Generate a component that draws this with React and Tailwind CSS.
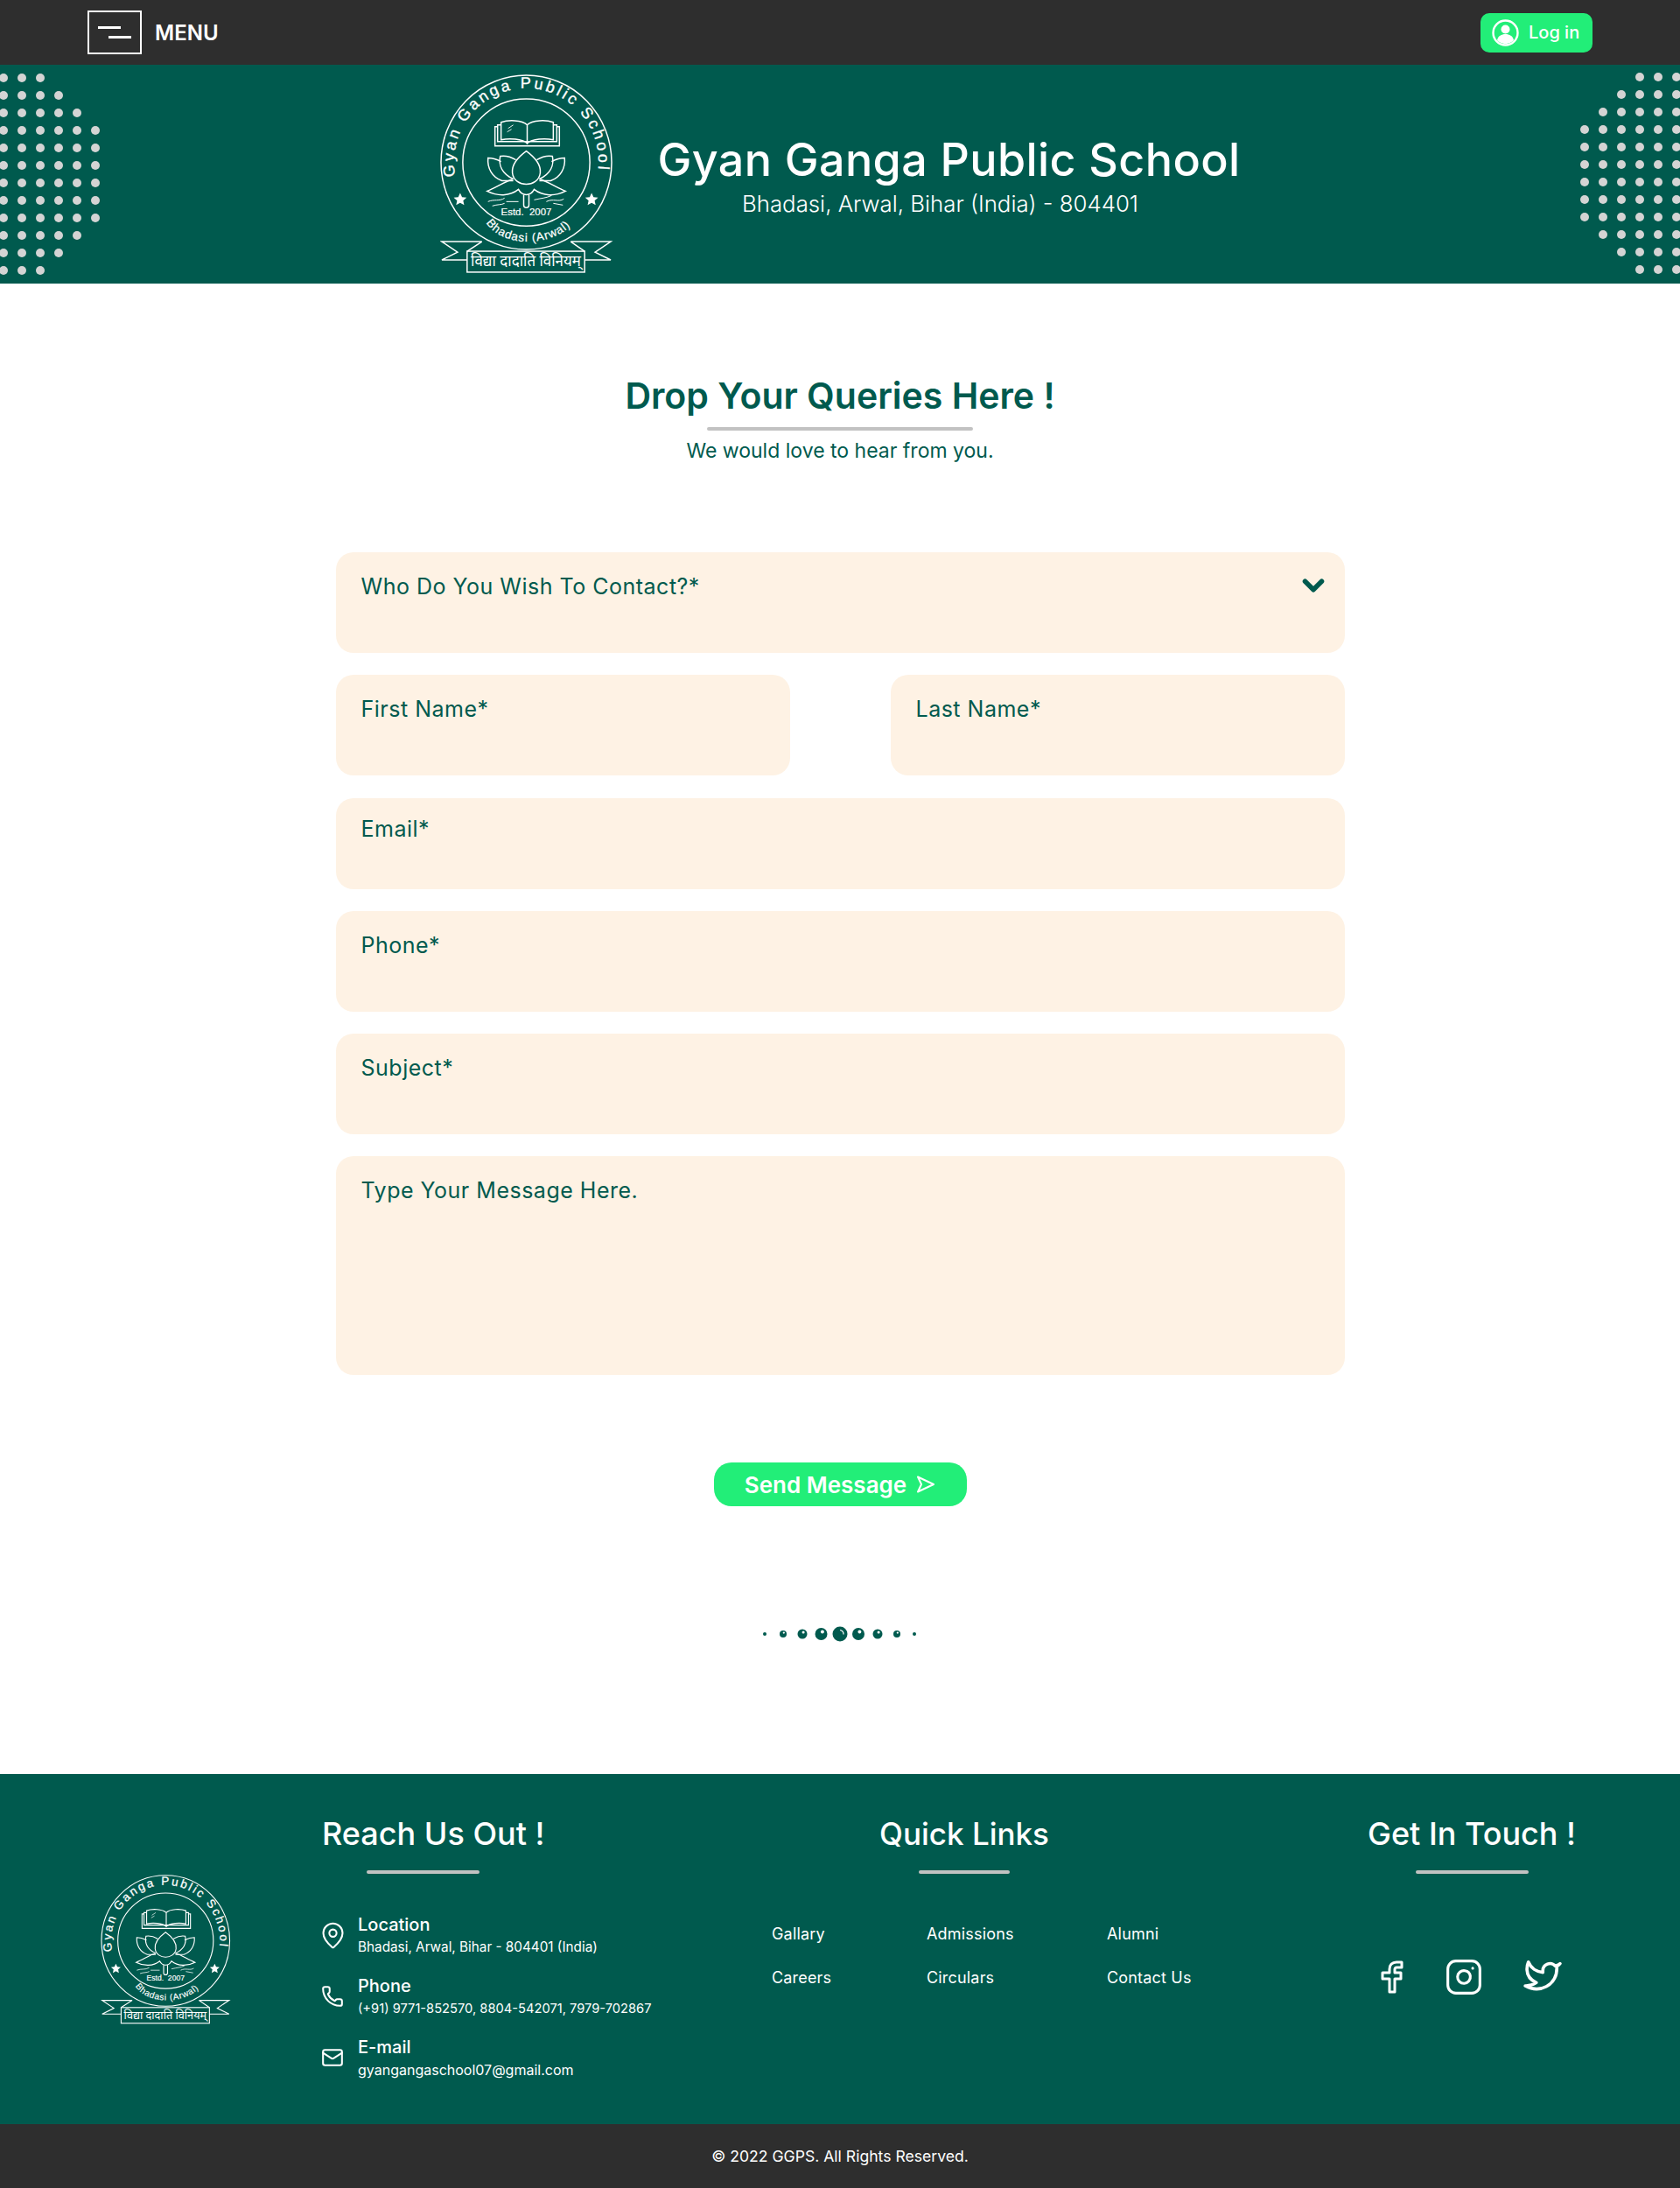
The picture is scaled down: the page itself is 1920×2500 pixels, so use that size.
import { MapPin, Phone, Mail, ChevronDown, Instagram } from 'lucide-react'

const font = "font-['Inter','Noto_Sans',sans-serif]"

function Dots({ counts, side }) {
  // each row is a line of dots hugging the page edge
  return (
    <div className={`flex flex-col gap-[10px] ${side === 'left' ? 'items-start' : 'items-end'}`}>
      {counts.map((count, i) => (
        <div key={i} className="flex gap-[11px]">
          {Array.from({ length: count }).map((_, j) => (
            <span key={j} className="h-[10px] w-[10px] rounded-full bg-[#d4d4d4]" />
          ))}
        </div>
      ))}
    </div>
  )
}

function Logo({ id, className }) {
  return (
    <svg viewBox="0 0 200 230" className={className} fill="none" stroke="#fff" strokeWidth="1.5">
      <defs>
        <path id={`${id}-top`} d="M 17.7 118 A 83 85 0 1 1 180.3 118" />
        <path id={`${id}-bottom`} d="M 50 165 C 65 201 135 201 157 165" />
      </defs>
      <ellipse cx="99" cy="101" rx="98" ry="100" />
      <ellipse cx="99" cy="101" rx="73" ry="73" />
      <text fill="#fff" stroke="#fff" strokeWidth="0.35" fontFamily="Liberation Sans, sans-serif" fontSize="18" letterSpacing="3.1">
        <textPath href={`#${id}-top`} startOffset="1">Gyan Ganga Public School</textPath>
      </text>
      <text fill="#fff" stroke="#fff" strokeWidth="0.2" fontFamily="Liberation Sans, sans-serif" fontSize="13.5" letterSpacing="0.9">
        <textPath href={`#${id}-bottom`} startOffset="6">Bhadasi (Arwal)</textPath>
      </text>
      <text x="99" y="162" textAnchor="middle" fill="#fff" stroke="#fff" strokeWidth="0.2" fontFamily="Liberation Sans, sans-serif" fontSize="11.5" xmlSpace="preserve">
        Estd.  2007
      </text>
      {/* stars */}
      <path d="M23 136l2.2 4.8 5.2.6-3.9 3.5 1.1 5.1-4.6-2.6-4.6 2.6 1.1-5.1-3.9-3.5 5.2-.6z" fill="#fff" stroke="none" />
      <path d="M174 136l2.2 4.8 5.2.6-3.9 3.500 1.1 5.1-4.6-2.6-4.6 2.6 1.1-5.1-3.9-3.5 5.2-.6z" fill="#fff" stroke="none" />
      {/* book */}
      <path d="M100 79V58C94 52 78 52 70 55V75C80 73 94 74 100 79ZM100 79V58C106 52 122 52 130 55V75C120 73 106 74 100 79Z" />
      <path d="M70 58H66V77H100M130 58H134V77H100M66 60H63V82H137V60H134" />
      <path d="M78 62l6-4M77 66l5-3" strokeWidth="0.9" />
      {/* lotus */}
      <path d="M99 88C88 96 82 104 83 113C84 122 92 126 99 126C106 126 114 122 115 113C116 104 110 96 99 88Z" />
      <path d="M87 98C80 94 74 93 69 94C67 104 71 114 84 120M111 98C118 94 124 93 129 94C131 104 127 114 114 120" />
      <path d="M70 100C64 97 60 96 55 96C54 108 60 118 71 122H84M128 100C134 97 138 96 143 96C144 108 138 118 127 122H114" />
      <path d="M84 120C76 122 64 130 54 134C66 140 80 140 90 132C92 136 96 138 99 138C102 138 106 136 108 132C118 140 132 140 144 134C134 130 122 122 114 120" />
      <path d="M96 138V150C96 154 102 154 102 150V138" />
      <path d="M55 146C62 143 68 146 74 142M60 151C66 149 70 150 74 148M76 146H90M108 144C116 142 122 142 128 139M122 146C130 142 136 147 142 143M130 148L141 150" strokeWidth="1" />
      {/* ribbon */}
      <path d="M48 192H2L20 204L2 213H31M150 192H196L178 204L196 213H166M31 203L48 192M166 203L150 192" />
      <rect x="31" y="203" width="135" height="24" />
      <text x="98.5" y="220" textAnchor="middle" fill="#fff" stroke="none" fontFamily="Noto Sans, DejaVu Sans, sans-serif" fontSize="17">
        विद्या दादाति विनियम्
      </text>
    </svg>
  )
}

function Field({ label, className, top = 'pt-[23px]', chevron, full = true }) {
  return (
    <div className={`flex justify-between rounded-[20px] bg-[#fef2e4] pl-[29px] pr-[17px] ${top} ${className} ${full ? 'w-full' : 'w-[519px]'}`}>
      <span className="text-[25px] leading-[32px] text-[#005a4e] tracking-[0.02em]">{label}</span>
      {chevron && <ChevronDown className="h-[38px] w-[38px] text-[#005a4e] -mt-[4px]" strokeWidth={3.5} />}
    </div>
  )
}

function Bubbles() {
  const bubbles = [
    [874, 2], [895, 4], [917, 5.5], [938.5, 7], [960, 8.5], [981, 7], [1003, 5.5], [1025, 4], [1045, 2]
  ]
  return (
    <svg width="190" height="20" viewBox="865 1857 190 20">
      {bubbles.map(([x, r]) => (
        <g key={x}>
          <circle cx={x} cy="1867" r={r} fill="#005a4e" />
          {r > 3 && r < 8 && <circle cx={x + r * 0.2} cy={1867 - r * 0.35} r={r * 0.28} fill="#fff" />}
        </g>
      ))}
      <path d="M960 1862.5a4.5 4.5 0 0 1 4 5" stroke="#fff" strokeWidth="1.2" fill="none" />
    </svg>
  )
}

function ContactItem({ icon, title, text, textClass }) {
  return (
    <div className="flex items-center gap-[18px]">
      <div className="flex h-[22px] w-[22px] items-center justify-center text-white">{icon}</div>
      <div>
        <p className="text-[20px] font-medium leading-[28px] text-white">{title}</p>
        <p className={`leading-[24px] text-white whitespace-nowrap ${textClass}`}>{text}</p>
      </div>
    </div>
  )
}

export default function App() {
  return (
    <div className={`w-full bg-white ${font}`}>
      {/* top bar */}
      <div className="flex h-[74px] items-center justify-between bg-[#2e2e2e] px-[100px]">
        <div className="flex items-center gap-[15px]">
          <div className="flex h-[50px] w-[62px] flex-col items-center justify-center gap-[8px] border-2 border-white">
            <span className="h-[3px] w-[26px] -translate-x-[6px] bg-white" />
            <span className="h-[3px] w-[26px] translate-x-[6px] bg-white" />
          </div>
          <span className="pt-[2px] text-[24px] font-semibold text-white">MENU</span>
        </div>
        <div className="flex h-[45px] w-[128px] items-center gap-[11px] rounded-[10px] bg-[#22ee78] pl-[13px]">
          <svg width="31" height="31" viewBox="0 0 31 31">
            <circle cx="15.5" cy="15.5" r="14" fill="none" stroke="#fff" strokeWidth="2.4" />
            <circle cx="15.5" cy="11.5" r="5" fill="#fff" />
            <path d="M6 24c1-5 5-7 9.500-7s8.500 2 9.500 7c-5 5.500-14 5.500-19 0z" fill="#fff" />
          </svg>
          <span className="text-[20px] font-medium text-white">Log in</span>
        </div>
      </div>

      {/* banner */}
      <div className="relative flex h-[250px] items-center justify-center overflow-hidden bg-[#005a4e]">
        <div className="absolute left-0 top-[10px] -ml-[1px]">
          <Dots side="left" counts={[3, 4, 5, 6, 6, 6, 6, 6, 6, 5, 4, 3]} />
        </div>
        <div className="absolute right-0 top-[9px] -mr-[1px]">
          <Dots side="right" counts={[3, 4, 5, 6, 6, 6, 6, 6, 6, 5, 4, 3]} />
        </div>
        <div className="flex items-center gap-[50px]">
          <Logo id="banner" className="h-[229px] w-[199px]" />
          <div className="mt-[6px] flex w-[666px] flex-col items-center">
            <h1 className="text-[52px] font-medium leading-[60px] text-white tracking-[0.008em] whitespace-nowrap">Gyan Ganga Public School</h1>
            <p className="mt-[2px] pr-[20px] text-[25.8px] font-light leading-[36px] text-white">Bhadasi, Arwal, Bihar (India) - 804401</p>
          </div>
        </div>
      </div>

      {/* contact form */}
      <div className="flex flex-col items-center pt-[98px]">
        <h2 className="text-[41px] font-semibold leading-[60px] text-[#005a4e]">Drop Your Queries Here !</h2>
        <div className="mt-[6px] h-[4px] w-[304px] rounded-full bg-[#c2c2c2]" />
        <p className="mt-[7px] text-[23px] leading-[33px] text-[#005a4e]">We would love to hear from you.</p>

        <div className="mt-[99px] flex w-[1153px] flex-col gap-[25.3px]">
          <Field label="Who Do You Wish To Contact?*" className="h-[115px]" chevron />
          <div className="flex justify-between">
            <Field label="First Name*" className="h-[115px]" full={false} />
            <Field label="Last Name*" className="h-[115px]" full={false} />
          </div>
          <Field label="Email*" className="h-[104px]" top="pt-[19px]" />
          <Field label="Phone*" className="h-[115px]" />
          <Field label="Subject*" className="h-[115px]" />
          <Field label="Type Your Message Here." className="h-[250px]" />
        </div>

        <button className="mt-[100px] flex h-[50px] w-[289px] items-center justify-center gap-[11px] rounded-[20px] bg-[#22ee78] text-[26px] font-semibold text-white">
          Send Message
          <svg width="22" height="22" viewBox="0 0 22 22" fill="none" stroke="#fff" strokeWidth="2" strokeLinejoin="round">
            <path d="M2 2.500L20 11L2 19.500L6 11Z" />
          </svg>
        </button>

        <div className="mb-[150px] mt-[136px] flex">
          <Bubbles />
        </div>
      </div>

      {/* footer */}
      <div className="flex h-[400px] items-start bg-[#005a4e] pl-[115px] pt-[43px]">
        <div className="mr-[104px] mt-[72px]">
          <Logo id="footer" className="h-[172px] w-[150px]" />
        </div>

        <div className="w-[513px]">
          <h3 className="-ml-[1px] text-[36px] font-medium leading-[50px] text-white">Reach Us Out !</h3>
          <div className="ml-[50px] mt-[17px] h-[4px] w-[129px] rounded-full bg-[#c2c2c2]" />
          <div className="mt-[44px] flex flex-col gap-[18px]">
            <ContactItem icon={<MapPin className="shrink-0" size={33} strokeWidth={1.5} />} title="Location" text="Bhadasi, Arwal, Bihar - 804401 (India)" textClass="text-[15.3px]" />
            <ContactItem icon={<Phone className="shrink-0" size={26} strokeWidth={1.9} />} title="Phone" text="(+91) 9771-852570, 8804-542071, 7979-702867" textClass="text-[14.7px]" />
            <ContactItem icon={<Mail className="shrink-0" size={26} strokeWidth={1.9} />} title="E-mail" text="gyangangaschool07@gmail.com" textClass="text-[16px]" />
          </div>
        </div>

        <div className="w-[440px]">
          <h3 className="text-center text-[35px] font-medium leading-[50px] text-white">Quick Links</h3>
          <div className="mx-auto mt-[17px] h-[4px] w-[104px] rounded-full bg-[#c2c2c2]" />
          <div className="mt-[55px] grid grid-cols-[177px_206px_auto] gap-y-[23px] text-[18px] leading-[27px] tracking-[0.01em] text-white whitespace-nowrap">
            <span>Gallary</span>
            <span>Admissions</span>
            <span>Alumni</span>
            <span>Careers</span>
            <span>Circulars</span>
            <span>Contact Us</span>
          </div>
        </div>

        <div className="ml-[241px] w-[240px]">
          <h3 className="text-[36px] font-medium leading-[50px] text-white whitespace-nowrap">Get In Touch !</h3>
          <div className="ml-[55px] mt-[17px] h-[4px] w-[129px] rounded-full bg-[#c2c2c2]" />
          <div className="ml-[15px] mt-[96px] flex items-center text-white">
            <svg width="26" height="38" viewBox="0 0 26 38" fill="none" stroke="currentColor" strokeWidth="3" strokeLinejoin="round">
              <path d="M24 2H18C13 2 10 5 10 10V14H2V21H10V36H16V21H23V14H16V10C16 9 17 8 18 8H24Z" />
            </svg>
            <Instagram className="ml-[47px] h-[44px] w-[44px]" strokeWidth={1.7} />
            <svg className="ml-[46px]" width="44" height="38" viewBox="0 0 24 21" fill="none" stroke="currentColor" strokeWidth="2" strokeLinejoin="round">
              <path d="M23 2a10.900 10.900 0 0 1-3 1.530 4.480 4.480 0 0 0-7.860 3v1A10.660 10.660 0 0 1 3 1s-4 9 5 13a11.640 11.640 0 0 1-7 2c9 5 20 0 20-11.500a4.500 4.500 0 0 0-.08-.83A7.720 7.720 0 0 0 23 2z" />
            </svg>
          </div>
        </div>
      </div>

      <div className="flex h-[73px] items-center justify-center bg-[#2e2e2e] text-[17.6px] text-white">
        © 2022 GGPS. All Rights Reserved.
      </div>
    </div>
  )
}
